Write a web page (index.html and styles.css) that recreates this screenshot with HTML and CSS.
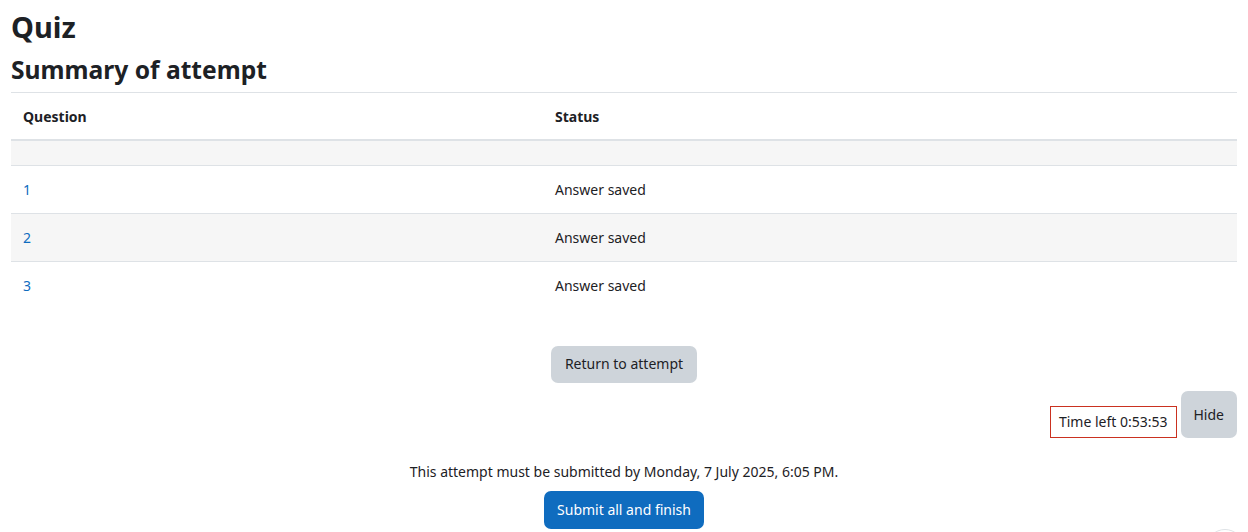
FILE: index.html
```html
<!DOCTYPE html>
<html lang="en">
<head>
  <meta charset="UTF-8" />
  <title>Quiz: Summary of attempt</title>
  <link rel="stylesheet" href="styles.css">
</head>
<body>
  <div class="page">
    <h1>Quiz</h1>
    <h2>Summary of attempt</h2>

    <table class="summary">
      <thead>
        <tr>
          <th class="c0">Question</th>
          <th class="c1">Status</th>
        </tr>
      </thead>
      <tbody>
        <tr class="spacer"><td></td><td></td></tr>
        <tr><td><a href="#">1</a></td><td>Answer saved</td></tr>
        <tr><td><a href="#">2</a></td><td>Answer saved</td></tr>
        <tr><td><a href="#">3</a></td><td>Answer saved</td></tr>
      </tbody>
    </table>

    <div class="controls">
      <button type="button" class="btn btn-secondary">Return to attempt</button>
    </div>

    <div class="timer-row">
      <div class="timer">Time left 0:53:53</div>
      <button type="button" class="btn btn-secondary btn-hide">Hide</button>
    </div>

    <div class="submit-box">
      <p>This attempt must be submitted by Monday, 7 July 2025, 6:05 PM.</p>
      <button type="button" class="btn btn-primary">Submit all and finish</button>
    </div>
  </div>
  <div class="footer-btn"></div>
</body>
</html>
```

FILE: styles.css
```css
body {
  margin: 0;
  font-family: "Noto Sans", "Open Sans", sans-serif;
  font-size: 14px;
  color: #1d2125;
  background: #fff;
}
.page {
  padding: 0 11px;
}
h1 {
  margin: 0;
  padding-top: 9px;
  font-size: 29px;
  line-height: 36px;
  font-weight: 700;
}
h2 {
  margin: 0;
  padding-top: 3px;
  font-size: 24.6px;
  line-height: 44px;
  font-weight: 700;
}
.summary {
  width: 100%;
  border-collapse: collapse;
  border-top: 1px solid #dee2e6;
}
.summary th {
  text-align: left;
  font-weight: 700;
  padding: 12px;
  height: 22px;
  border-bottom: 2px solid #dee2e6;
}
.summary .c0 {
  width: 508px;
}
.summary td {
  padding: 12px;
  height: 23px;
  border-top: 1px solid #dee2e6;
}
.summary tr.spacer td {
  height: 0;
  padding: 12px;
  border-top: none;
}
.summary tbody tr:nth-child(odd) {
  background: #f6f6f6;
}
.summary tbody tr:last-child td {
  height: 22px;
}
a {
  color: #0f6cbf;
  text-decoration: none;
}
.controls {
  display: flex;
  justify-content: center;
  padding-top: 38px;
}
.btn {
  font-family: inherit;
  font-size: 14px;
  line-height: 20px;
  border: none;
  border-radius: 7px;
  padding: 8px 14px 9px;
  cursor: pointer;
}
.btn-secondary {
  background: #ced4da;
  color: #1d2125;
}
.btn-primary {
  background: #0f6cbf;
  color: #fff;
  padding: 9px 13px;
}
.timer-row {
  display: flex;
  justify-content: flex-end;
  align-items: flex-end;
  gap: 4px;
  margin-top: 8px;
}
.timer {
  border: 1px solid #ca3120;
  padding: 5px 8px;
  line-height: 20px;
}
.btn-hide {
  height: 47px;
  padding: 0 13px;
}
.submit-box {
  text-align: center;
  padding-top: 23px;
}
.submit-box p {
  margin: 0 0 8px;
  line-height: 22px;
}
.footer-btn {
  position: fixed;
  right: 4px;
  top: 529px;
  width: 36px;
  height: 36px;
  border-radius: 50%;
  border: 1px solid #dee2e6;
  background: #fff;
}
```
